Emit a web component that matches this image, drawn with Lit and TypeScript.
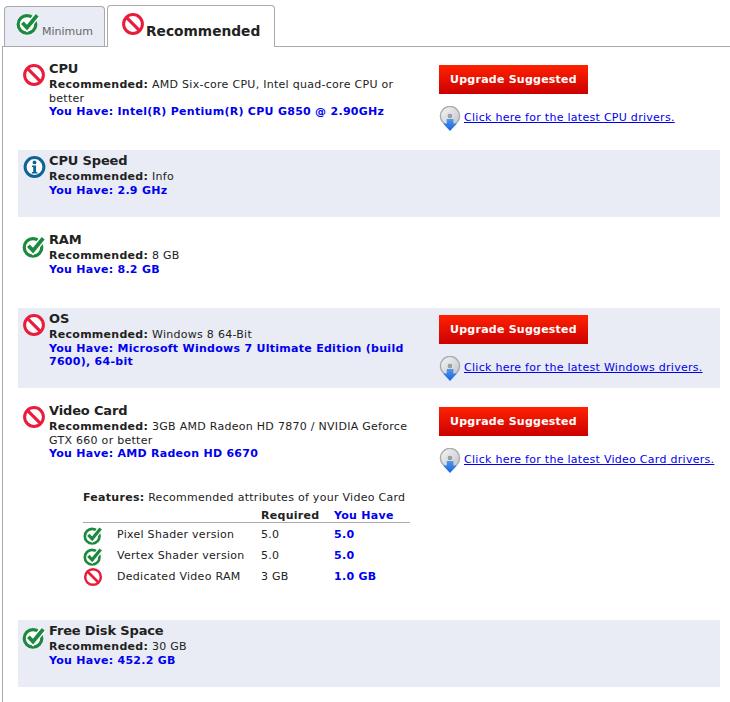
import { LitElement, html, css } from "lit";
import { customElement } from "lit/decorators.js";

type Kind = "no" | "ok" | "info";

const icon = (k: Kind, cls = "ic") => {
  if (k === "no")
    return html`<svg class=${cls} viewBox="0 0 24 24">
      <circle cx="12" cy="12" r="9.4" fill="#fff" stroke="#ea1c3c" stroke-width="3" />
      <path d="M5.4 5.4 18.6 18.6" stroke="#ea1c3c" stroke-width="3.2" fill="none" />
    </svg>`;
  if (k === "info")
    return html`<svg class=${cls} viewBox="0 0 24 24">
      <circle cx="12.5" cy="12" r="9.4" fill="#fff" stroke="#0f6496" stroke-width="3" />
      <circle cx="12.5" cy="7.4" r="1.9" fill="#0f6496" />
      <path d="M10 10.4h4v6.6h1.4v1.6H9.8V17h1.4v-5H10z" fill="#0f6496" />
    </svg>`;
  return html`<svg class=${cls} viewBox="0 0 24 24">
    <circle cx="11" cy="13.4" r="8.8" fill="#fff" stroke="#1c8a3e" stroke-width="3.2" />
    <path d="M6.4 11.8 11 16.6 21.2 4.2" fill="none" stroke="#fff" stroke-width="6.6" />
    <path d="M6.4 11.8 11 16.6 21.2 4.2" fill="none" stroke="#1c8a3e" stroke-width="3.8" />
  </svg>`;
};

const disc = html`<svg class="disc" viewBox="0 0 22 25">
  <defs>
    <linearGradient id="dg" x1="0" y1="0" x2="1" y2="1">
      <stop offset="0" stop-color="#f6f6f6" />
      <stop offset="1" stop-color="#c0c4c8" />
    </linearGradient>
    <linearGradient id="ag" x1="0" y1="0" x2="0" y2="1">
      <stop offset="0" stop-color="#4f97ee" />
      <stop offset="1" stop-color="#1a62d8" />
    </linearGradient>
  </defs>
  <circle cx="11" cy="10" r="9.6" fill="url(#dg)" stroke="#a8acb0" stroke-width="1.4" />
  <circle cx="11" cy="10" r="3" fill="#9ca0a4" stroke="#e8e8e8" stroke-width="1" />
  <path d="M7.8 13h6.6v4.6h3.6L11 25 4 17.6h3.8z" fill="url(#ag)" />
</svg>`;

interface Row {
  kind: Kind;
  title: string;
  rec: string;
  have: string;
  link?: string;
  shaded?: boolean;
  features?: boolean;
}

const rows: Row[] = [
  { kind: "no", title: "CPU", rec: "AMD Six-core CPU, Intel quad-core CPU or better", have: "Intel(R) Pentium(R) CPU G850 @ 2.90GHz", link: "CPU" },
  { kind: "info", title: "CPU Speed", rec: "Info", have: "2.9 GHz", shaded: true },
  { kind: "ok", title: "RAM", rec: "8 GB", have: "8.2 GB" },
  { kind: "no", title: "OS", rec: "Windows 8 64-Bit", have: "Microsoft Windows 7 Ultimate Edition (build 7600), 64-bit", link: "Windows", shaded: true },
  { kind: "no", title: "Video Card", rec: "3GB AMD Radeon HD 7870 / NVIDIA Geforce GTX 660 or better", have: "AMD Radeon HD 6670", link: "Video Card", features: true },
  { kind: "ok", title: "Free Disk Space", rec: "30 GB", have: "452.2 GB", shaded: true },
];

const feats: [Kind, string, string, string][] = [
  ["ok", "Pixel Shader version", "5.0", "5.0"],
  ["ok", "Vertex Shader version", "5.0", "5.0"],
  ["no", "Dedicated Video RAM", "3 GB", "1.0 GB"],
];

@customElement("app-root")
export class AppRoot extends LitElement {
  static styles = css`
    :host {
      display: block;
      width: 730px;
      height: 702px;
      overflow: hidden;
      background: #fff;
      font-family: "DejaVu Sans", Verdana, sans-serif;
      font-size: 11px;
      line-height: 13.5px;
      color: #222;
      box-sizing: border-box;
      padding-top: 5px;
    }
    .tabs {
      display: flex;
      align-items: flex-end;
      padding-left: 4px;
      gap: 2px;
      height: 41px;
      position: relative;
      z-index: 1;
    }
    .tab {
      box-sizing: border-box;
      border: 1px solid #aaa;
      border-bottom: none;
      border-radius: 4px 4px 0 0;
      display: flex;
    }
    .tab.off {
      width: 101px;
      height: 40px;
      background: #e9ecf4;
      color: #666;
      padding: 4px 0 0 11px;
    }
    .tab.off span {
      margin: 14px 0 0 2px;
    }
    .tab.on {
      width: 168px;
      height: 42px;
      margin-bottom: -1px;
      background: #fff;
      padding: 6px 0 0 13px;
      color: #222;
      font-weight: bold;
      font-size: 13.75px;
    }
    .tab.on span {
      margin: 13px 0 0 1px;
      white-space: nowrap;
    }
    .ic-tab {
      width: 24px;
      height: 24px;
      flex: none;
    }
    .panel {
      box-sizing: border-box;
      margin-left: 2px;
      height: 656px;
      border-left: 1px solid #aaa;
      border-top: 1px solid #aaa;
      padding: 11px 0 0 15px;
      display: flex;
      flex-direction: column;
      gap: 12px;
      letter-spacing: 0.28px;
    }
    .row {
      width: 702px;
      box-sizing: border-box;
      min-height: 67px;
      display: grid;
      grid-template-columns: 31px 390px 1fr;
    }
    .row.shaded {
      background: #e9ecf4;
    }
    .icon-col {
      padding: 5px 0 0 4px;
    }
    .ic {
      width: 24px;
      height: 24px;
      display: block;
    }
    .body {
      padding-top: 4px;
    }
    .title {
      font-size: 13px;
      font-weight: bold;
      line-height: 14px;
      margin-bottom: 2px;
      letter-spacing: -0.15px;
    }
    .main {
      width: 372px;
    }
    .lbl {
      font-weight: bold;
    }
    .have {
      color: #0000ee;
      font-weight: bold;
    }
    .side {
      padding: 7px 0 7px;
    }
    .btn {
      width: 149px;
      height: 29px;
      box-sizing: border-box;
      background: linear-gradient(#ff2200, #cc0000);
      color: #fff;
      font-weight: bold;
      letter-spacing: 0.24px;
      display: flex;
      align-items: center;
      justify-content: center;
    }
    .dl {
      display: flex;
      align-items: flex-end;
      margin-top: 12px;
      white-space: nowrap;
    }
    .disc {
      width: 22px;
      height: 25px;
      flex: none;
    }
    .dl a {
      color: #0000ee;
      text-decoration: underline;
      margin: 0 0 7px 3px;
    }
    .features {
      margin: 30px 0 20px 34px;
      width: 327px;
    }
    .features .head {
      white-space: nowrap;
      margin-bottom: 6px;
    }
    table {
      border-collapse: collapse;
      width: 327px;
    }
    th {
      text-align: left;
      font-weight: bold;
      padding: 0;
      height: 12px;
      line-height: 12px;
      border-bottom: 1px solid #aaa;
    }
    th.y,
    td.y {
      color: #0000ee;
      font-weight: bold;
    }
    td {
      padding: 0;
      height: 22px;
    }
    tr:nth-child(2) td {
      height: 21px;
      padding-top: 1px;
    }
    tr:nth-child(3) td {
      height: 21px;
    }
    .c1 {
      width: 34px;
    }
    .c2 {
      width: 144px;
    }
    .c3 {
      width: 73px;
    }
    .ic-small {
      width: 20px;
      height: 20px;
      display: block;
    }
  `;

  private renderFeatures() {
    return html`<div class="features">
      <div class="head"><span class="lbl">Features:</span> Recommended attributes of your Video Card</div>
      <table>
        <tr>
          <th class="c1"></th>
          <th class="c2"></th>
          <th class="c3">Required</th>
          <th class="y">You Have</th>
        </tr>
        ${feats.map(
          ([k, n, r, h]) => html`<tr>
            <td>${icon(k, "ic-small")}</td>
            <td>${n}</td>
            <td>${r}</td>
            <td class="y">${h}</td>
          </tr>`
        )}
      </table>
    </div>`;
  }

  render() {
    return html`
      <div class="tabs">
        <div class="tab off">${icon("ok", "ic-tab")}<span>Minimum</span></div>
        <div class="tab on">${icon("no", "ic-tab")}<span>Recommended</span></div>
      </div>
      <div class="panel">
        ${rows.map(
          (r) => html`<div class="row ${r.shaded ? "shaded" : ""}">
            <div class="icon-col">${icon(r.kind)}</div>
            <div class="body">
              <div class="main">
                <div class="title">${r.title}</div>
                <div><span class="lbl">Recommended:</span> ${r.rec}</div>
                <div class="have">You Have: ${r.have}</div>
              </div>
              ${r.features ? this.renderFeatures() : ""}
            </div>
            <div class="side">
              ${r.link
                ? html`<div class="btn">Upgrade Suggested</div>
                    <div class="dl">${disc}<a href="#">Click here for the latest ${r.link} drivers.</a></div>`
                : ""}
            </div>
          </div>`
        )}
      </div>
    `;
  }
}
